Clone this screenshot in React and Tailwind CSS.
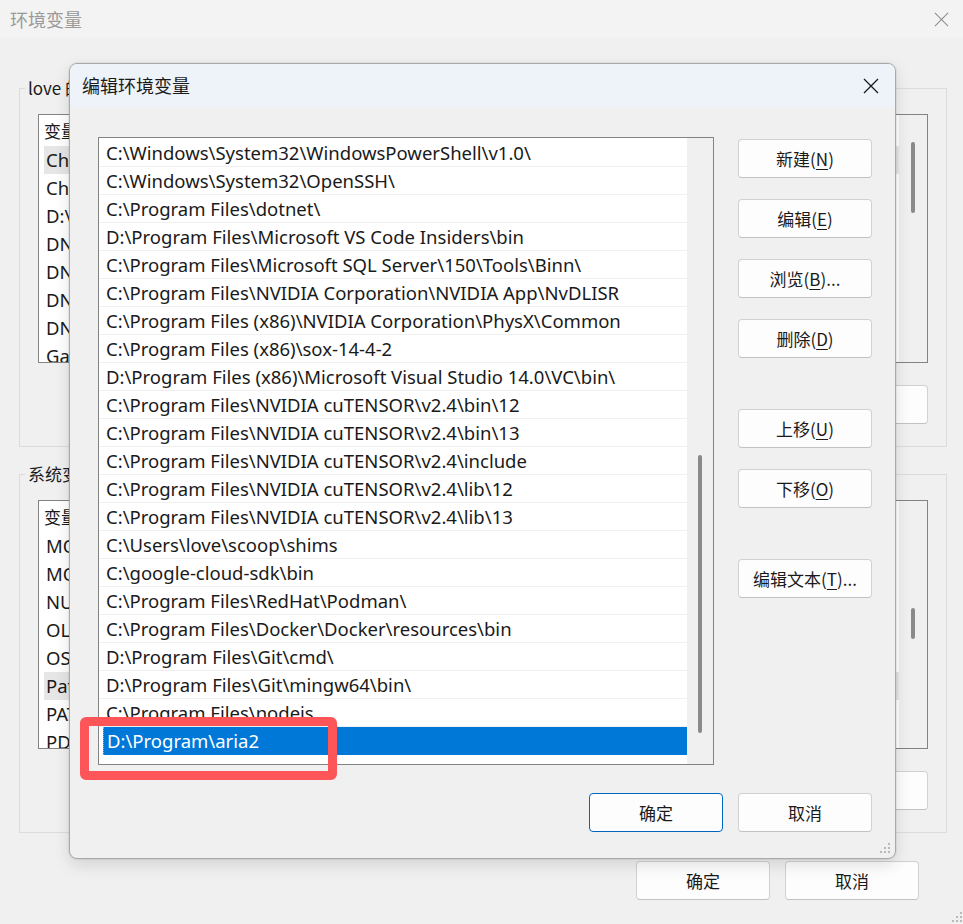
import React from "react";

const FONT = "font-['Noto_Sans','Noto_Sans_CJK_SC',sans-serif]";
const CJK = "font-['Noto_Sans_CJK_SC','Noto_Sans',sans-serif]";

const paths = [
  "C:\\Windows\\System32\\WindowsPowerShell\\v1.0\\",
  "C:\\Windows\\System32\\OpenSSH\\",
  "C:\\Program Files\\dotnet\\",
  "D:\\Program Files\\Microsoft VS Code Insiders\\bin",
  "C:\\Program Files\\Microsoft SQL Server\\150\\Tools\\Binn\\",
  "C:\\Program Files\\NVIDIA Corporation\\NVIDIA App\\NvDLISR",
  "C:\\Program Files (x86)\\NVIDIA Corporation\\PhysX\\Common",
  "C:\\Program Files (x86)\\sox-14-4-2",
  "D:\\Program Files (x86)\\Microsoft Visual Studio 14.0\\VC\\bin\\",
  "C:\\Program Files\\NVIDIA cuTENSOR\\v2.4\\bin\\12",
  "C:\\Program Files\\NVIDIA cuTENSOR\\v2.4\\bin\\13",
  "C:\\Program Files\\NVIDIA cuTENSOR\\v2.4\\include",
  "C:\\Program Files\\NVIDIA cuTENSOR\\v2.4\\lib\\12",
  "C:\\Program Files\\NVIDIA cuTENSOR\\v2.4\\lib\\13",
  "C:\\Users\\love\\scoop\\shims",
  "C:\\google-cloud-sdk\\bin",
  "C:\\Program Files\\RedHat\\Podman\\",
  "C:\\Program Files\\Docker\\Docker\\resources\\bin",
  "D:\\Program Files\\Git\\cmd\\",
  "D:\\Program Files\\Git\\mingw64\\bin\\",
  "C:\\Program Files\\nodejs",
];

const userVars = ["ChocolateyInstall", "ChocolateyLastPathUpdate", "D:\\", "DNNL_HOME", "DNNL_ROOT", "DNNL_LIB", "DNNL_INC", "GatewayPath"];
const sysVars = ["MOZ_PLUGIN_PATH", "MOZ_CRASH", "NUMBER_OF_PROCESSORS", "OLLAMA_MODELS", "OS", "Path", "PATHEXT", "PDFTK"];

function CloseX({ size = 16, color = "#1a1a1a", stroke = 1.2 }) {
  return (
    <svg width={size} height={size} viewBox="0 0 16 16">
      <path d="M1 1L15 15M15 1L1 15" stroke={color} strokeWidth={stroke} fill="none" />
    </svg>
  );
}

function Grip() {
  return (
    <svg width="10" height="10" viewBox="0 0 10 10">
      <g fill="#b8b8b8">
        <rect x="8" y="0" width="2" height="2" />
        <rect x="4" y="4" width="2" height="2" />
        <rect x="8" y="4" width="2" height="2" />
        <rect x="0" y="8" width="2" height="2" />
        <rect x="4" y="8" width="2" height="2" />
        <rect x="8" y="8" width="2" height="2" />
      </g>
    </svg>
  );
}

function Btn({ children, primary = false, className = "" }) {
  return (
    <div
      className={`w-[134px] h-[39px] shrink-0 flex items-center justify-center rounded-[4px] bg-[#fdfdfd] text-[17px] text-[#1a1a1a] ${CJK} ${
        primary ? "border border-[#0067c0]" : "border border-[#d1d1d1] border-b-[#c2c2c2]"
      } ${className}`}
    >
      {children}
    </div>
  );
}

function Acc({ pre, k, post }) {
  return (
    <span>
      {pre}(<span className="underline underline-offset-[3px]">{k}</span>){post}
    </span>
  );
}

function BgList({ items, highlight, thumbTop, thumbH }) {
  return (
    <div className="h-[249px] border border-[#838383] bg-white flex overflow-hidden">
      <div className="flex-1 flex flex-col overflow-hidden">
        <div className={`h-[31px] shrink-0 flex items-center pl-[5px] text-[17px] text-[#1a1a1a] ${CJK}`}>变量</div>
        {items.map((t, i) => (
          <div
            key={i}
            className={`h-[28px] shrink-0 flex items-center pl-[2px] ml-[5px] text-[18.5px] text-[#1a1a1a] ${
              i === highlight ? "bg-[#e6e6e6]" : ""
            }`}
          >
            {t}
          </div>
        ))}
      </div>
      <div className="w-[28px] shrink-0 bg-[#f0f0f0] flex flex-col items-center">
        <div style={{ marginTop: thumbTop, height: thumbH }} className="w-[4px] rounded-full bg-[#8a8a8a]" />
      </div>
    </div>
  );
}

function Group({ label, items, highlight, thumbTop, thumbH, className = "" }) {
  return (
    <fieldset className={`ml-[19px] mr-[16px] border border-[#dcdcdc] px-[18px] pb-[22px] ${className}`}>
      <legend className={`ml-[-13px] px-[3px] text-[17px] leading-[24px] text-[#1a1a1a] ${CJK}`}>{label}</legend>
      <div className="mt-[14px]">
        <BgList items={items} highlight={highlight} thumbTop={thumbTop} thumbH={thumbH} />
      </div>
      <div className="mt-[22px] flex justify-end gap-[15px]">
        <Btn>新建</Btn>
        <Btn>编辑</Btn>
        <Btn>删除</Btn>
      </div>
    </fieldset>
  );
}

export default function App() {
  return (
    <div className={`relative w-[963px] h-[924px] overflow-hidden bg-[#f0f0f0] ${FONT}`}>
      {/* background window */}
      <div className="flex flex-col h-full">
        <div className="h-[38px] shrink-0 bg-[#f3f3f3] flex items-center justify-between pl-[10px] pr-[14px]">
          <span className={`text-[18px] text-[#9a9a9a] ${CJK}`}>环境变量</span>
          <CloseX size={15} color="#8c8c8c" stroke={1.1} />
        </div>
        <div className="pt-[38px] flex flex-col">
          <Group label="love 的用户变量(U)" items={userVars} highlight={0} thumbTop={27} thumbH={71} />
          <Group label="系统变量(S)" items={sysVars} highlight={5} thumbTop={107} thumbH={31} className="mt-[15px]" />
          <div className="mt-[28px] flex justify-end gap-[15px] pr-[44px]">
            <Btn>确定</Btn>
            <Btn>取消</Btn>
          </div>
        </div>
        <div className="mt-auto flex justify-end pr-[1px] pb-[2px]">
          <Grip />
        </div>
      </div>

      {/* edit dialog */}
      <div className="absolute left-[69px] top-[63px] w-[827px] h-[796px] rounded-[8px] border border-[#a9a9a9] bg-[#f0f0f0] shadow-[0_0_0_1px_rgba(0,0,0,0.05),0_6px_16px_rgba(0,0,0,0.12)] flex flex-col overflow-hidden">
        <div className="h-[43px] shrink-0 bg-[#eef2f9] flex items-center justify-between pl-[12px] pr-[16px]">
          <span className={`text-[18px] text-[#1a1a1a] ${CJK}`}>编辑环境变量</span>
          <CloseX size={16} color="#1a1a1a" stroke={1.3} />
        </div>
        <div className="flex-1 flex flex-col pl-[28px] pr-[23px]">
          <div className="flex pt-[30px]">
            <div className="w-[616px] h-[628px] border border-[#838383] bg-white flex overflow-hidden">
              <div className="w-[588px] shrink-0 flex flex-col pt-[1px] overflow-hidden">
                {paths.map((p, i) => (
                  <div
                    key={i}
                    className="h-[28px] shrink-0 flex items-center pl-[7px] border-b border-[#f0f0f0] text-[18.5px] text-[#1a1a1a] whitespace-nowrap"
                  >
                    {p}
                  </div>
                ))}
                <div className="h-[28px] shrink-0 ml-[4px] flex items-center pl-[3px] bg-[#0078d7] text-white text-[18.5px] border-l border-dotted border-[#e8a050]">
                  D:\Program\aria2
                </div>
              </div>
              <div className="flex-1 bg-[#f0f0f0] flex flex-col items-center">
                <div className="mt-[317px] h-[278px] w-[4px] rounded-full bg-[#8a8a8a]" />
              </div>
            </div>
            <div className="ml-[24px] mt-[2px] flex flex-col">
              <Btn><Acc pre="新建" k="N" /></Btn>
              <Btn className="mt-[21px]"><Acc pre="编辑" k="E" /></Btn>
              <Btn className="mt-[21px]"><Acc pre="浏览" k="B" post="..." /></Btn>
              <Btn className="mt-[21px]"><Acc pre="删除" k="D" /></Btn>
              <Btn className="mt-[51px]"><Acc pre="上移" k="U" /></Btn>
              <Btn className="mt-[21px]"><Acc pre="下移" k="O" /></Btn>
              <Btn className="mt-[51px]"><Acc pre="编辑文本" k="T" post="..." /></Btn>
            </div>
          </div>
          <div className="mt-[28px] flex justify-end gap-[15px]">
            <Btn primary>确定</Btn>
            <Btn>取消</Btn>
          </div>
        </div>
        <div className="absolute right-[5px] bottom-[5px]">
          <Grip />
        </div>
      </div>

      {/* red annotation box */}
      <div className="absolute left-[80px] top-[717px] w-[257px] h-[63px] rounded-[6px] border-[9px] border-[#fd5558]" />
    </div>
  );
}
